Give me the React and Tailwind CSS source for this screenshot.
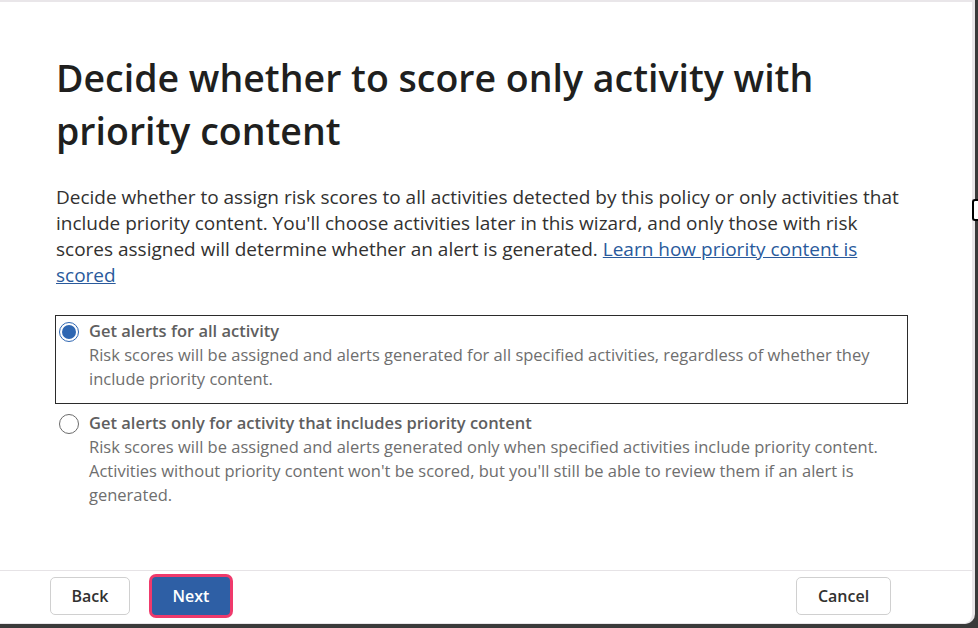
import React from 'react';

function Radio({ checked }) {
  return (
    <span
      className={
        'mt-[3px] flex h-[20px] w-[20px] shrink-0 items-center justify-center rounded-full border bg-white ' +
        (checked ? 'border-[#2f67b2]' : 'border-[#6b6b6b]')
      }
    >
      {checked && <span className="h-[14px] w-[14px] rounded-full bg-[#2f67b2]" />}
    </span>
  );
}

function Option({ checked, title, children }) {
  return (
    <div
      className={
        'flex gap-[10px] pl-[3px] pr-4 pt-[3px] pb-[12px] ' +
        (checked ? 'border border-[#2b2b2b]' : 'border border-transparent')
      }
    >
      <Radio checked={checked} />
      <div>
        <div className="text-[16.5px] font-semibold leading-[24px] text-[#5f5f5f]">{title}</div>
        <div className="text-[16.5px] leading-[24px] text-[#6e6e6e]">{children}</div>
      </div>
    </div>
  );
}

export default function App() {
  return (
    <div className="h-[628px] w-[978px] overflow-hidden bg-[#3a3a3a] font-['Open_Sans',sans-serif]">
      <div className="relative flex h-[624px] w-[975px] flex-col">
        <div className="flex h-full w-full flex-col rounded-br-[10px] border-r-[3px] border-t-[2px] border-b border-[#e9e6e9] bg-white">
          <div className="flex-1 pl-[56px] pr-[50px] pt-[49px]">
            <h1 className="max-w-[800px] text-[37.5px] font-semibold leading-[53px] text-[#201f1e]">
              Decide whether to score only activity with priority content
            </h1>
            <p className="mt-[27px] max-w-[860px] text-[19px] leading-[26px] text-[#323130]">
              Decide whether to assign risk scores to all activities detected by this policy or only activities that
              include priority content. You'll choose activities later in this wizard, and only those with risk
              scores assigned will determine whether an alert is generated.{' '}
              <a href="#" className="text-[#2a5a9c] underline">Learn how priority content is scored</a>
            </p>
            <div className="mt-[27px] w-[853px] -ml-[1px]">
              <Option checked title="Get alerts for all activity">
                Risk scores will be assigned and alerts generated for all specified activities, regardless of whether they
                include priority content.
              </Option>
              <div className="mt-[3px]">
                <Option title="Get alerts only for activity that includes priority content">
                  Risk scores will be assigned and alerts generated only when specified activities include priority content.
                  Activities without priority content won't be scored, but you'll still be able to review them if an alert is
                  generated.
                </Option>
              </div>
            </div>
          </div>
          <div className="flex h-[53px] items-start border-t border-[#e6e3e6] pl-[50px] pr-[81px] pt-[6px]">
            <button className="h-[38px] w-[80px] rounded-[5px] border border-[#d0d0d0] bg-white text-[16px] font-semibold text-[#323130]">
              Back
            </button>
            <button className="ml-[22px] h-[38px] w-[78px] rounded-[4px] bg-[#2e5fa5] text-[16px] font-semibold text-white ring-[3px] ring-[#ef3a6c]">
              Next
            </button>
            <button className="ml-auto h-[38px] w-[95px] rounded-[5px] border border-[#d0d0d0] bg-white text-[16px] font-semibold text-[#323130]">
              Cancel
            </button>
          </div>
        </div>
        <span className="absolute right-[-3px] top-[199px] h-[22px] w-[6px] rounded-l-[3px] border-2 border-r-0 border-black bg-white" />
      </div>
    </div>
  );
}
